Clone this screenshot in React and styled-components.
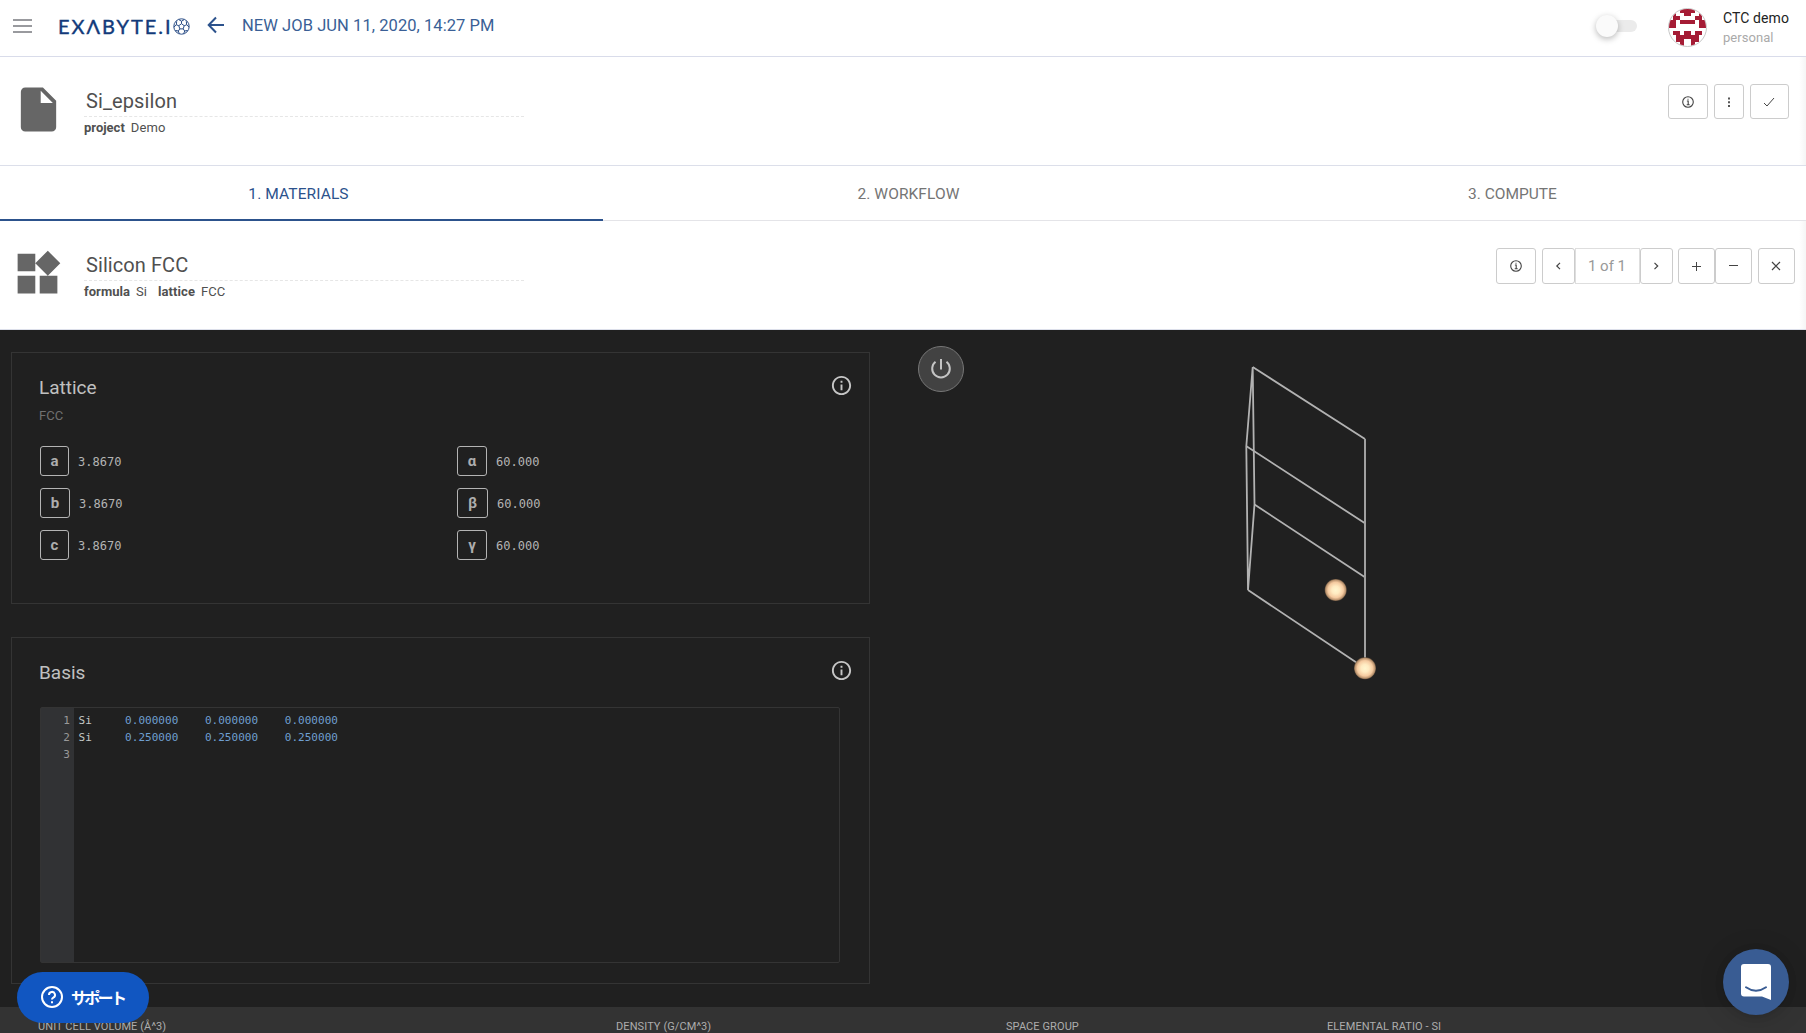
import React from "react";
import styled, { createGlobalStyle } from "styled-components";

const Global = createGlobalStyle`
  * { box-sizing: border-box; }
  body { margin: 0; overflow: hidden; background: #202020; }
  svg { display: block; }
`;

const Page = styled.div`
  width: 1806px;
  height: 1033px;
  overflow: hidden;
  position: relative;
  display: flex;
  flex-direction: column;
  font-family: Roboto, "Noto Sans CJK JP", sans-serif;
  color: #505050;
  background: #fff;
`;

const Label = styled.span`
  white-space: pre;
  font-size: ${(p) => p.$size}px;
  line-height: ${(p) => p.$line || 20}px;
  font-weight: ${(p) => p.$weight || 400};
  letter-spacing: ${(p) => p.$track || 0}px;
  color: ${(p) => p.$color || "inherit"};
`;

/* Top bar */
const TopBar = styled.header`
  flex: none;
  height: 57px;
  display: flex;
  align-items: flex-start;
  border-bottom: 1px solid #d9dcea;
`;
const MenuIcon = styled.div`
  width: 19px;
  height: 14px;
  margin: 19px 0 0 13px;
  display: flex;
  flex-direction: column;
  justify-content: space-between;
  & > i { height: 2px; background: #999a9e; }
`;
const Logo = styled.div`
  display: flex;
  width: 132px;
  margin: 14px 0 0 26px;
  & > svg { margin: 4px 0 0 0; flex: none; }
`;
const LogoText = styled.span`
  width: 115px;
  white-space: nowrap;
  font: 400 20px/25px Lato, sans-serif;
  letter-spacing: 2px;
  color: #123a7a;
  -webkit-text-stroke: 0.4px #123a7a;
`;
const BackIcon = styled.div`
  margin: 16px 0 0 17px;
  width: 18px;
`;
const Crumb = styled.div`
  flex: 1;
  margin: 14px 0 0 17px;
`;
const Toggle = styled.div`
  width: 42px;
  height: 24px;
  margin: 14px 30px 0 0;
  display: flex;
  align-items: center;
`;
const ToggleKnob = styled.div`
  width: 22px;
  height: 22px;
  border-radius: 50%;
  background: #fafafa;
  box-shadow: 0 2px 6px rgba(0, 0, 0, 0.28);
  z-index: 1;
`;
const ToggleTrack = styled.div`
  width: 30px;
  height: 12px;
  margin-left: -11px;
  border-radius: 6px;
  background: #ebebeb;
`;
const Avatar = styled.div`
  width: 39px;
  height: 39px;
  margin: 8px 16px 0 0;
  border-radius: 50%;
  border: 1px solid #c8c8c8;
  overflow: hidden;
`;
const Account = styled.div`
  width: 83px;
  margin-top: 8px;
  display: flex;
  flex-direction: column;
`;

/* Entity header */
const Entity = styled.section`
  flex: none;
  height: 109px;
  display: flex;
  align-items: flex-start;
  border-bottom: 1px solid #dcdfea;
  background: linear-gradient(to left, #f5f5f5, #fff 7px);
`;
const EntityIcon = styled.div`
  width: 53px;
  margin: 25.5px 0 0 ${(p) => p.$left}px;
`;
const EntityBody = styled.div`
  width: 440px;
  margin-left: ${(p) => p.$gap}px;
  padding-top: 31px;
`;
const EntityName = styled.div`
  height: 29px;
  padding-left: 2px;
  border-bottom: 1px dashed #e6e6e6;
`;
const Meta = styled.div`
  display: flex;
  gap: 6px;
  padding-top: 1px;
`;
const MetaPair = styled.div`
  display: flex;
  gap: 6px;
  margin-right: 5px;
`;
const Actions = styled.div`
  margin: 27px ${(p) => p.$right}px 0 auto;
  display: flex;
  gap: 6px;
`;
const Group = styled.div`
  display: flex;
  margin-right: ${(p) => (p.$tight ? -1 : 0)}px;
`;
const Button = styled.button`
  width: ${(p) => p.$w}px;
  height: ${(p) => p.$h}px;
  padding: 0 1px 0 0;
  display: flex;
  align-items: center;
  justify-content: center;
  background: #fff;
  border: 1px solid ${(p) => (p.$soft ? "#dedede" : "#ccc")};
  border-radius: ${(p) => (p.$soft ? 0 : 3)}px;
  color: #444;
  font-family: Roboto, sans-serif;
`;

/* Tabs */
const Tabs = styled.nav`
  flex: none;
  height: 55px;
  display: flex;
  position: relative;
  border-bottom: 1px solid #e4e4e8;
`;
const Tab = styled.div`
  width: ${(p) => p.$w}px;
  display: flex;
  justify-content: center;
  padding-top: 18px;
  color: ${(p) => (p.$active ? "#2c528c" : "#757575")};
`;
const Indicator = styled.div`
  position: absolute;
  left: 0;
  bottom: -1px;
  width: 603px;
  height: 2px;
  background: #2c528c;
`;

/* Designer */
const Designer = styled.main`
  flex: none;
  height: 677px;
  display: flex;
  background: #202020;
  color: #c0c0c0;
`;
const Panels = styled.div`
  width: 870px;
  padding: 22px 0 0 11px;
  display: flex;
  flex-direction: column;
  gap: 33px;
`;
const Card = styled.section`
  width: 859px;
  height: ${(p) => p.$h}px;
  padding: 21px 16px 0 27px;
  border: 1px solid #343434;
`;
const CardHead = styled.div`
  display: flex;
  justify-content: space-between;
  height: 30px;
`;
const Params = styled.div`
  display: grid;
  grid-template-columns: 417px 1fr;
  row-gap: 12px;
  margin: 18px 0 0 1px;
`;
const Param = styled.div`
  display: flex;
  align-items: center;
  height: 30px;
  & > span + span { padding-top: 2px; }
`;
const Badge = styled.span`
  width: ${(p) => p.$w}px;
  height: 30px;
  margin-right: 9px;
  display: flex;
  align-items: center;
  justify-content: center;
  border: 1px solid #b4b4b4;
  border-radius: 3px;
  font-size: 15px;
  font-weight: 700;
  color: #adadad;
`;
const Mono = styled.span`
  white-space: pre;
  font: ${(p) => p.$size || 11}px/17px "DejaVu Sans Mono", monospace;
  letter-spacing: 0.03px;
  color: ${(p) => p.$color || "#b4b4b4"};
`;
const Editor = styled.div`
  display: flex;
  width: 800px;
  height: 256px;
  margin: 18px 0 0 1px;
  border: 1px solid #343434;
  border-radius: 2px;
`;
const Gutter = styled.div`
  width: 33px;
  padding: 4px 4px 0 0;
  background: #313234;
  display: flex;
  flex-direction: column;
  align-items: flex-end;
`;
const Code = styled.div`
  padding: 4px 0 0 4.5px;
  display: flex;
  flex-direction: column;
`;
const Viewer = styled.div`
  flex: 1;
  display: flex;
  align-items: flex-start;
  padding-left: 48px;
`;
const Power = styled.button`
  width: 46px;
  height: 46px;
  margin-top: 16px;
  padding: 0;
  display: flex;
  align-items: center;
  justify-content: center;
  border-radius: 50%;
  border: 1px solid #777;
  background: #424242;
  color: #c4c4c4;
`;
const Crystal = styled.svg`
  margin: 20px 0 0 256px;
`;
const Stats = styled.footer`
  flex: none;
  height: 26px;
  padding: 10px 0 0 38px;
  display: grid;
  grid-template-columns: 578px 390px 321px 1fr;
  background: #333;
  color: #adadad;
`;

/* Floating widgets */
const Support = styled.button`
  position: absolute;
  left: 17px;
  top: 972px;
  width: 132px;
  height: 51px;
  padding: 0 0 2px 23px;
  display: flex;
  align-items: center;
  gap: 7px;
  border: 0;
  border-radius: 26px;
  background: #1156c1;
  color: #fff;
  font-family: "Noto Sans CJK JP", sans-serif;
`;
const Chat = styled.button`
  position: absolute;
  left: 1723px;
  top: 949px;
  width: 66px;
  height: 66px;
  padding: 0;
  border: 0;
  border-radius: 50%;
  background: #395c93;
  box-shadow: 0 1px 8px rgba(0, 0, 0, 0.1), 0 2px 26px rgba(0, 0, 0, 0.16);
`;

const Glyph = ({ size = 12, w = 1, children }) => (
  <svg width={size} height={size} viewBox="0 0 12 12" fill="none" stroke="currentColor" strokeWidth={w}>
    {children}
  </svg>
);
const SmallInfo = () => (
  <Glyph w={1.1}>
    <circle cx="6" cy="6" r="5.3" />
    <path d="M4.9 5h1.3v3.7M4.7 8.7h3M5.5 3.3h1" />
  </Glyph>
);
const BigInfo = () => (
  <svg width="23" height="23" viewBox="0 0 24 24" fill="#c6c6c6">
    <path d="M11 17h2v-6h-2v6zm1-15C6.48 2 2 6.48 2 12s4.48 10 10 10 10-4.48 10-10S17.52 2 12 2zm0 18c-4.41 0-8-3.59-8-8s3.59-8 8-8 8 3.59 8 8-3.59 8-8 8zM11 9h2V7h-2v2z" />
  </svg>
);
const Ball = () => (
  <svg width="17" height="17" viewBox="0 0 17 17" fill="none" stroke="#2a4d86" strokeWidth="1">
    <circle cx="8.5" cy="8.5" r="7.7" />
    <path d="M8.5 5.7l2.7 2-1 3.2H6.8l-1-3.2zM8.5 5.7V3.2M11.2 7.7l2.5-.9M10.2 10.9l1.5 2.1M6.8 10.9L5.3 13M5.8 7.7l-2.5-.9M8.5 3.2L5.6 1.5M8.5 3.2l2.9-1.7M13.7 6.8l-.4-3.4M13.7 6.8l2.4 2.3M11.7 13l3-.6M11.7 13l-1 2.8M5.3 13l-3-.6M5.3 13l1 2.8M3.3 6.8L.9 9.1M3.3 6.8l.4-3.4" />
  </svg>
);

const identicon = ["00011", "01001", "01100", "11011", "11000", "00000", "01101", "00111", "00110", "00010"];
const Identicon = () => (
  <svg width="37" height="37" viewBox="0 0 10 10" shapeRendering="crispEdges" fill="#a51c35">
    {identicon.flatMap((row, y) =>
      [...row, ...[...row].reverse()].map((c, x) =>
        c === "1" ? <rect key={`${x}-${y}`} x={x} y={y} width="1" height="1" /> : null
      )
    )}
  </svg>
);

const params = [
  ["a", 29, "3.8670"], ["α", 30, "60.000"],
  ["b", 30, "3.8670"], ["β", 31, "60.000"],
  ["c", 29, "3.8670"], ["γ", 30, "60.000"],
];
const coords = ["0.000000", "0.250000"];
const stats = ["UNIT CELL VOLUME (Å^3)", "DENSITY (G/CM^3)", "SPACE GROUP", "ELEMENTAL RATIO - SI"];

export default function App() {
  return (
    <Page>
      <Global />
      <TopBar>
        <MenuIcon><i /><i /><i /></MenuIcon>
        <Logo><LogoText>EXΛBYTE.I</LogoText><Ball /></Logo>
        <BackIcon>
          <svg width="18" height="18" viewBox="0 0 18 18" fill="none" stroke="#2c528c" strokeWidth="2">
            <path d="M17 9H2M9 1.5L1.7 9 9 16.5" />
          </svg>
        </BackIcon>
        <Crumb><Label $size={16.5} $line={24} $track={0.06} $color="#3a5f96">NEW JOB JUN 11, 2020, 14:27 PM</Label></Crumb>
        <Toggle><ToggleKnob /><ToggleTrack /></Toggle>
        <Avatar><Identicon /></Avatar>
        <Account>
          <Label $size={14} $track={0.1} $color="#222">CTC demo</Label>
          <Label $size={13} $line={19} $track={0.05} $color="#aaa">personal</Label>
        </Account>
      </TopBar>

      <Entity>
        <EntityIcon $left={12}>
          <svg width="53" height="53" viewBox="0 0 24 24" fill="#666">
            <path d="M6 2c-1.1 0-1.99.9-1.99 2L4 20c0 1.1.89 2 1.99 2H18c1.1 0 2-.9 2-2V8l-6-6H6zm7 7V3.5L18.5 9H13z" />
          </svg>
        </EntityIcon>
        <EntityBody $gap={19}>
          <EntityName><Label $size={20} $line={26} $track={0.1}>Si_epsilon</Label></EntityName>
          <Meta><MetaPair><Label $size={13} $weight={700}>project</Label><Label $size={13} $track={0.1}>Demo</Label></MetaPair></Meta>
        </EntityBody>
        <Actions $right={17}>
          <Button $w={40} $h={35}><SmallInfo /></Button>
          <Button $w={30} $h={35}>
            <Glyph><path d="M6 1.5v2M6 5.2v2M6 9v2" strokeWidth="1.8" /></Glyph>
          </Button>
          <Button $w={39} $h={35}><Glyph><path d="M1 7l3 3 7-8" /></Glyph></Button>
        </Actions>
      </Entity>

      <Tabs>
        <Tab $w={597} $active><Label $size={15.5} $track={0.1}>1. MATERIALS</Label></Tab>
        <Tab $w={623}><Label $size={15.5} $track={0.07}>2. WORKFLOW</Label></Tab>
        <Tab $w={585}><Label $size={15.5}>3. COMPUTE</Label></Tab>
        <Indicator />
      </Tabs>

      <Entity>
        <EntityIcon $left={11}>
          <svg width="53" height="53" viewBox="0 0 24 24" fill="#666">
            <path d="M13 13v8h8v-8h-8zM3 21h8v-8H3v8zM3 3v8h8V3H3zm13.66-1.31L11 7.34 16.66 13l5.66-5.66-5.66-5.65z" />
          </svg>
        </EntityIcon>
        <EntityBody $gap={20}>
          <EntityName><Label $size={20} $line={26} $track={0.08}>Silicon FCC</Label></EntityName>
          <Meta>
            <MetaPair><Label $size={13} $weight={700} $track={0.05}>formula</Label><Label $size={13}>Si</Label></MetaPair>
            <MetaPair><Label $size={13} $weight={700} $track={0.1}>lattice</Label><Label $size={13}>FCC</Label></MetaPair>
          </Meta>
        </EntityBody>
        <Actions $right={11}>
          <Button $w={40} $h={36}><SmallInfo /></Button>
          <Group $tight>
            <Button $w={33} $h={36}><Glyph w={1.2}><path d="M8 2.8L4.8 6l3.2 3.2" /></Glyph></Button>
            <Button $w={65} $h={36} $soft><Label $size={15} $color="#999">1 of 1</Label></Button>
            <Button $w={33} $h={36}><Glyph w={1.2}><path d="M4.5 2.8L7.7 6 4.5 9.2" /></Glyph></Button>
          </Group>
          <Group>
            <Button $w={37} $h={36}><Glyph><path d="M2 6.5h9M6.5 2v9" /></Glyph></Button>
            <Button $w={37} $h={36}><Glyph><path d="M2 5.5h9" /></Glyph></Button>
          </Group>
          <Button $w={37} $h={36}><Glyph w={1.2}><path d="M2 2l8 8M10 2l-8 8" /></Glyph></Button>
        </Actions>
      </Entity>

      <Designer>
        <Panels>
          <Card $h={252}>
            <CardHead><Label $size={19} $line={28}>Lattice</Label><BigInfo /></CardHead>
            <Label $size={13} $line={24} $color="#707070">FCC</Label>
            <Params>
              {params.map(([name, w, value]) => (
                <Param key={name}><Badge $w={w}>{name}</Badge><Mono $size={12}>{value}</Mono></Param>
              ))}
            </Params>
          </Card>
          <Card $h={347}>
            <CardHead><Label $size={19} $line={28}>Basis</Label><BigInfo /></CardHead>
            <Editor>
              <Gutter>{[1, 2, 3].map((n) => <Mono key={n} $color="#999">{n}</Mono>)}</Gutter>
              <Code>
                {coords.map((c) => (
                  <Mono key={c} $color="#c5c8c6">Si     <Mono $color="#6f9fd0">{`${c}    ${c}    ${c}`}</Mono></Mono>
                ))}
              </Code>
            </Editor>
          </Card>
        </Panels>
        <Viewer>
          <Power>
            <svg width="22" height="22" viewBox="0 0 22 22" fill="none" stroke="currentColor" strokeWidth="2">
              <path d="M11 1v10.5M5.5 3.8a8.8 8.8 0 1 0 11 0" />
            </svg>
          </Power>
          <Crystal width="160" height="350" viewBox="1220 350 160 350" fill="none">
            <defs>
              <radialGradient id="atom">
                <stop offset="0" stopColor="#fff6cf" />
                <stop offset="0.35" stopColor="#ffebc2" />
                <stop offset="0.7" stopColor="#f5caa0" />
                <stop offset="0.9" stopColor="#bb946f" />
                <stop offset="1" stopColor="#6a5440" />
              </radialGradient>
            </defs>
            <g stroke="#b2b2b2" strokeWidth="1.8">
              <path d="M1252.7 367L1365 439M1246.5 446.2L1365 523.3M1254.5 504.5L1365 577.3M1248 590L1365 668.3" />
              <path d="M1252.7 367L1246.3 446.2L1248 590L1254.5 504.5Z" />
            </g>
            <path d="M1365 439V668" stroke="#a0a0a0" strokeWidth="2" />
            <circle cx="1335.7" cy="590" r="11" fill="url(#atom)" />
            <circle cx="1365" cy="668.3" r="11" fill="url(#atom)" />
          </Crystal>
        </Viewer>
      </Designer>

      <Stats>{stats.map((s) => <Label key={s} $size={11} $track={0.09}>{s}</Label>)}</Stats>

      <Support>
        <svg width="24" height="24" viewBox="0 0 24 24" fill="none" stroke="#fff" strokeWidth="2">
          <circle cx="12" cy="12" r="10" />
          <path d="M9 10a3 3 0 1 1 4.3 2.6c-.9.5-1.3 1-1.3 2M12 16.2v2" />
        </svg>
        <Label $size={16} $weight={700} $track={-2.7}>サポート</Label>
      </Support>
      <Chat>
        <svg width="66" height="66" viewBox="0 0 66 66">
          <path d="M21 15h24a3 3 0 0 1 3 3v33l-9-3.5H21a3 3 0 0 1-3-3V18a3 3 0 0 1 3-3z" fill="#fff" />
          <path d="M23 38.3q10 7 20 0" stroke="#395c93" strokeWidth="2" strokeLinecap="round" fill="none" />
        </svg>
      </Chat>
    </Page>
  );
}
